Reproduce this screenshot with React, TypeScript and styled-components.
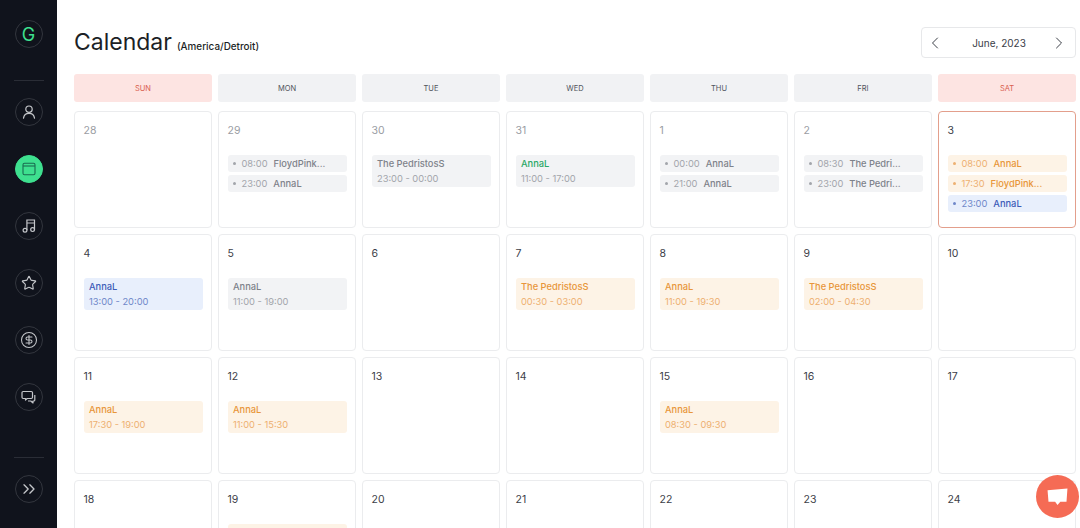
import React from 'react'
import styled, { createGlobalStyle, css } from 'styled-components'
import { ChevronLeft, ChevronRight, ChevronsRight, CircleDollarSign, Star } from 'lucide-react'

const GlobalStyle = createGlobalStyle`
  html, body {
    margin: 0;
    padding: 0;
    height: 100%;
    overflow: hidden;
    background: #fff;
    font-family: Inter, "Liberation Sans", sans-serif;
    color: #1c1f26;
  }
  * {
    box-sizing: border-box;
  }
`

const Page = styled.div`
  display: flex;
  height: 528px;
  overflow: hidden;
`

const Sidebar = styled.nav`
  width: 57px;
  flex: none;
  height: 528px;
  background: #10131c;
  display: flex;
  flex-direction: column;
  align-items: center;
  padding: 20px 0 25px;
`

const Divider = styled.div`
  width: 30px;
  height: 1px;
  flex: none;
  background: #2a2d36;
  margin: 32px 0 17px;
`

const BottomDivider = styled(Divider)`
  margin: auto 0 17px;
`

const NavList = styled.div`
  display: flex;
  flex-direction: column;
  gap: 29px;
`

const NavCircle = styled.div<{ $active?: boolean }>`
  width: 28px;
  height: 28px;
  flex: none;
  border-radius: 50%;
  display: flex;
  align-items: center;
  justify-content: center;
  border: 1px solid #33363e;
  color: #c4c6ca;
  ${(p) =>
    p.$active &&
    css`
      background: #3ee08f;
      border-color: #3ee08f;
      color: #1a6b50;
    `}
`

const Logo = styled(NavCircle)`
  color: #3ee08f;
  font-size: 18px;
  font-weight: 400;
`

const Main = styled.main`
  flex: 1;
  min-width: 0;
  padding: 27px 4px 0 17px;
`

const Header = styled.header`
  display: flex;
  justify-content: space-between;
  align-items: flex-start;
  height: 47px;
`

const TitleRow = styled.div`
  display: flex;
  align-items: baseline;
  gap: 5px;
`

const Title = styled.h1`
  margin: 0;
  font-size: 23px;
  line-height: 30px;
  font-weight: 400;
  color: #1c1f26;
`

const Zone = styled.span`
  font-size: 9.9px;
  font-weight: 500;
  color: #1c1f26;
`

const MonthPicker = styled.div`
  width: 155px;
  height: 31px;
  border: 1px solid #e7e8ea;
  border-radius: 4px;
  display: flex;
  align-items: center;
  justify-content: space-between;
  padding: 0 6px 0 3px;
  font-size: 10px;
  color: #3c4048;
`

const MonthLabel = styled.span`
  margin-left: 4px;
`

const Grid = styled.div`
  display: grid;
  grid-template-columns: repeat(7, 138px);
  grid-auto-rows: 117px;
  gap: 6px;
`

const WeekRow = styled.div`
  display: grid;
  grid-template-columns: repeat(7, 138px);
  gap: 6px;
  margin-bottom: 9px;
`

const WeekDay = styled.div<{ $weekend?: boolean }>`
  height: 28px;
  border-radius: 3px;
  display: flex;
  align-items: center;
  justify-content: center;
  font-size: 7.5px;
  background: ${(p) => (p.$weekend ? '#fde4e2' : '#f1f2f4')};
  color: ${(p) => (p.$weekend ? '#d9604f' : '#50545c')};
`

const Cell = styled.div<{ $today?: boolean }>`
  border: 1px solid ${(p) => (p.$today ? '#e39f8c' : '#ebecee')};
  border-radius: 4px;
  padding: 12px 8.5px 0;
  display: flex;
  flex-direction: column;
`

const DayNumber = styled.div<{ $muted?: boolean }>`
  font-size: 10.5px;
  line-height: 14px;
  height: 31px;
  color: ${(p) => (p.$muted ? '#9a9da3' : '#3c4048')};
`

const EventList = styled.div`
  display: flex;
  flex-direction: column;
  gap: 3px;
`

type Tone = 'gray' | 'orange' | 'blue' | 'green'

const tones: Record<Tone, { bg: string; name: string; time: string }> = {
  gray: { bg: '#f2f3f5', name: '#7e828a', time: '#a2a5ab' },
  orange: { bg: '#fdf3e6', name: '#e8963a', time: '#edb071' },
  blue: { bg: '#e8effc', name: '#3d5cb8', time: '#6f87c9' },
  green: { bg: '#f2f3f5', name: '#2aa866', time: '#a2a5ab' },
}

const EventBlock = styled.div<{ $tone: Tone }>`
  height: 32px;
  border-radius: 3px;
  padding: 1px 5.5px 0;
  background: ${(p) => tones[p.$tone].bg};
  font-size: 9.3px;
  line-height: 15px;
`

const EventName = styled.div<{ $tone: Tone }>`
  font-weight: 500;
  color: ${(p) => tones[p.$tone].name};
`

const EventTime = styled.div<{ $tone: Tone }>`
  color: ${(p) => tones[p.$tone].time};
`

const EventLine = styled.div<{ $tone: Tone }>`
  height: 17px;
  border-radius: 3px;
  padding: 0 5px;
  display: flex;
  align-items: center;
  background: ${(p) => tones[p.$tone].bg};
  font-size: 9.3px;
  white-space: nowrap;
`

const Dot = styled.span<{ $tone: Tone }>`
  width: 3px;
  height: 3px;
  border-radius: 50%;
  margin-right: 6px;
  background: ${(p) => tones[p.$tone].time};
`

const LineTime = styled.span<{ $tone: Tone }>`
  color: ${(p) => tones[p.$tone].time};
  margin-right: 6px;
`

const LineName = styled.span<{ $tone: Tone }>`
  font-weight: 500;
  color: ${(p) => tones[p.$tone].name};
`

const ChatButton = styled.div`
  position: fixed;
  left: 1035.5px;
  top: 475px;
  width: 43px;
  height: 43px;
  border-radius: 50%;
  background: #f56b55;
  display: flex;
  align-items: center;
  justify-content: center;
`

type Item =
  | { kind: 'block'; name: string; time: string; tone: Tone }
  | { kind: 'line'; name: string; time: string; tone: Tone }

type Day = { n: number; muted?: boolean; today?: boolean; items?: Item[] }

const block = (name: string, time: string, tone: Tone): Item => ({ kind: 'block', name, time, tone })
const line = (time: string, name: string, tone: Tone): Item => ({ kind: 'line', name, time, tone })

const short = (name: string) => (name.length > 12 ? `${name.slice(0, 9)}...` : name)

const weekDays = ['SUN', 'MON', 'TUE', 'WED', 'THU', 'FRI', 'SAT']

const days: Day[] = [
  { n: 28, muted: true },
  { n: 29, muted: true, items: [line('08:00', 'FloydPinkerton', 'gray'), line('23:00', 'AnnaL', 'gray')] },
  { n: 30, muted: true, items: [block('The PedristosS', '23:00 - 00:00', 'gray')] },
  { n: 31, muted: true, items: [block('AnnaL', '11:00 - 17:00', 'green')] },
  { n: 1, muted: true, items: [line('00:00', 'AnnaL', 'gray'), line('21:00', 'AnnaL', 'gray')] },
  { n: 2, muted: true, items: [line('08:30', 'The PedristosS', 'gray'), line('23:00', 'The PedristosS', 'gray')] },
  {
    n: 3,
    today: true,
    items: [line('08:00', 'AnnaL', 'orange'), line('17:30', 'FloydPinkerton', 'orange'), line('23:00', 'AnnaL', 'blue')],
  },
  { n: 4, items: [block('AnnaL', '13:00 - 20:00', 'blue')] },
  { n: 5, items: [block('AnnaL', '11:00 - 19:00', 'gray')] },
  { n: 6 },
  { n: 7, items: [block('The PedristosS', '00:30 - 03:00', 'orange')] },
  { n: 8, items: [block('AnnaL', '11:00 - 19:30', 'orange')] },
  { n: 9, items: [block('The PedristosS', '02:00 - 04:30', 'orange')] },
  { n: 10 },
  { n: 11, items: [block('AnnaL', '17:30 - 19:00', 'orange')] },
  { n: 12, items: [block('AnnaL', '11:00 - 15:30', 'orange')] },
  { n: 13 },
  { n: 14 },
  { n: 15, items: [block('AnnaL', '08:30 - 09:30', 'orange')] },
  { n: 16 },
  { n: 17 },
  { n: 18 },
  { n: 19, items: [block('AnnaL', '11:00 - 15:30', 'orange')] },
  { n: 20 },
  { n: 21 },
  { n: 22 },
  { n: 23 },
  { n: 24 },
]

const UserIcon = () => (
  <svg width="16" height="16" viewBox="0 0 16 16" fill="none" stroke="currentColor" strokeWidth="1.2" strokeLinecap="round">
    <circle cx="8" cy="5.2" r="3.2" />
    <path d="M2.500 14.200c.4-3 2.600-4.800 5.500-4.800s5.100 1.800 5.500 4.800" />
  </svg>
)

const CalendarIcon = () => (
  <svg width="14" height="14" viewBox="0 0 14 14" fill="none" stroke="currentColor" strokeWidth="1.1">
    <rect x="1" y="1.200" width="12" height="11.600" rx="1.500" />
    <path d="M1 4h12" />
  </svg>
)

const MusicIcon = () => (
  <svg width="14" height="14" viewBox="0 0 14 14" fill="none" stroke="currentColor" strokeWidth="1.2">
    <circle cx="3" cy="11.300" r="1.900" />
    <circle cx="10.600" cy="10.600" r="1.900" />
    <path d="M4.900 11.300V1h7.600v9.600M4.900 4h7.600" />
  </svg>
)

const ChatsIcon = () => (
  <svg width="15" height="15" viewBox="0 0 15 15" fill="none" stroke="currentColor" strokeWidth="1.2" strokeLinejoin="round">
    <path d="M2.200 1.500h8.100a1.200 1.200 0 0 1 1.200 1.200v4.600a1.200 1.200 0 0 1-1.200 1.200H6.200L4.500 10V8.500H2.200A1.200 1.200 0 0 1 1 7.300V2.700a1.200 1.200 0 0 1 1.200-1.200Z" />
    <path d="M13.800 5v5a1 1 0 0 1-1 1h-.8v2l-2.200-2H7" />
  </svg>
)

const ChatBubble = () => (
  <svg width="21" height="18" viewBox="0 0 22 19" fill="#fff">
    <path d="M0.500 2.500 21.500 0.500 20.500 14.500H14L11 18 8.500 14.500H1.500Z" />
  </svg>
)

const App = () => {
  return (
    <Page>
      <GlobalStyle />
      <Sidebar>
        <Logo>G</Logo>
        <Divider />
        <NavList>
          <NavCircle>
            <UserIcon />
          </NavCircle>
          <NavCircle $active>
            <CalendarIcon />
          </NavCircle>
          <NavCircle>
            <MusicIcon />
          </NavCircle>
          <NavCircle>
            <Star size={16} strokeWidth={1.7} />
          </NavCircle>
          <NavCircle>
            <CircleDollarSign size={18} strokeWidth={1.4} />
          </NavCircle>
          <NavCircle>
            <ChatsIcon />
          </NavCircle>
        </NavList>
        <BottomDivider />
        <NavCircle>
          <ChevronsRight size={20} strokeWidth={1.6} />
        </NavCircle>
      </Sidebar>
      <Main>
        <Header>
          <TitleRow>
            <Title>Calendar</Title>
            <Zone>(America/Detroit)</Zone>
          </TitleRow>
          <MonthPicker>
            <ChevronLeft size={20} strokeWidth={1.2} />
            <MonthLabel>June, 2023</MonthLabel>
            <ChevronRight size={20} strokeWidth={1.2} />
          </MonthPicker>
        </Header>
        <WeekRow>
          {weekDays.map((d, i) => (
            <WeekDay key={d} $weekend={i === 0 || i === 6}>
              {d}
            </WeekDay>
          ))}
        </WeekRow>
        <Grid>
          {days.map((day) => (
            <Cell key={`${day.n}-${day.muted ? 'p' : 'c'}`} $today={day.today}>
              <DayNumber $muted={day.muted}>{day.n}</DayNumber>
              <EventList>
                {day.items?.map((item, i) =>
                  item.kind === 'block' ? (
                    <EventBlock key={i} $tone={item.tone}>
                      <EventName $tone={item.tone}>{item.name}</EventName>
                      <EventTime $tone={item.tone}>{item.time}</EventTime>
                    </EventBlock>
                  ) : (
                    <EventLine key={i} $tone={item.tone}>
                      <Dot $tone={item.tone} />
                      <LineTime $tone={item.tone}>{item.time}</LineTime>
                      <LineName $tone={item.tone}>{short(item.name)}</LineName>
                    </EventLine>
                  ),
                )}
              </EventList>
            </Cell>
          ))}
        </Grid>
      </Main>
      <ChatButton>
        <ChatBubble />
      </ChatButton>
    </Page>
  )
}

export default App
